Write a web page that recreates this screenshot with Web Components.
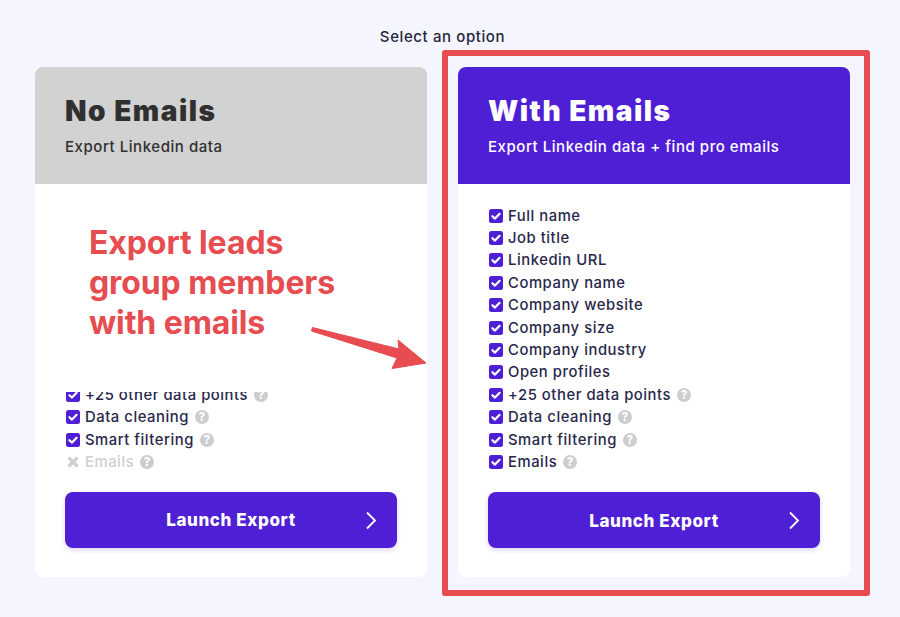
<!DOCTYPE html>
<html>
<head>
<meta charset="utf-8">
<title>Select an option</title>
<style>
  html, body { margin: 0; height: 100%; }
  body { background: #f5f5ff; font-family: "Inter", "Liberation Sans", sans-serif; overflow: hidden; }
</style>
</head>
<body>
<export-page>
  <option-card slot="cards" heading="No Emails" sub="Export Linkedin data" tone="muted">
    <red-note></red-note>
    <feature-list clip>
      <feature-row hint>+25 other data points</feature-row>
      <feature-row hint>Data cleaning</feature-row>
      <feature-row hint>Smart filtering</feature-row>
      <feature-row hint off>Emails</feature-row>
    </feature-list>
  </option-card>
  <option-card slot="cards" heading="With Emails" sub="Export Linkedin data + find pro emails" tone="brand">
    <feature-list>
      <feature-row>Full name</feature-row>
      <feature-row>Job title</feature-row>
      <feature-row>Linkedin URL</feature-row>
      <feature-row>Company name</feature-row>
      <feature-row>Company website</feature-row>
      <feature-row>Company size</feature-row>
      <feature-row>Company industry</feature-row>
      <feature-row>Open profiles</feature-row>
      <feature-row hint>+25 other data points</feature-row>
      <feature-row hint>Data cleaning</feature-row>
      <feature-row hint>Smart filtering</feature-row>
      <feature-row hint>Emails</feature-row>
    </feature-list>
  </option-card>
</export-page>

<script>
class ExportPage extends HTMLElement {
  constructor() {
    super();
    this.attachShadow({ mode: 'open' });
    this.shadowRoot.innerHTML = `
    <style>
      :host{ display:block; position:relative; width:900px; height:617px; box-sizing:border-box; padding-top:27px; }
      h1{
        margin:0 0 21px; padding-right:15px; text-align:center; font-size:15px; line-height:19px; font-weight:500;
        letter-spacing:.6px; color:#25253a;
      }
      .cards{ display:grid; grid-template-columns:392px 392px; column-gap:31px; padding-left:35px; }
      .frame{
        position:absolute; left:442px; top:50px; width:428px; height:546px; box-sizing:border-box;
        border:6px solid #e64c50; border-radius:3px; pointer-events:none;
      }
      svg{ position:absolute; left:0; top:0; pointer-events:none; }
    </style>
    <h1>Select an option</h1>
    <div class="cards"><slot name="cards"></slot></div>
    <div class="frame"></div>
    <svg width="900" height="617" viewBox="0 0 900 617">
      <path d="M312.5 327.5 L399 349 L398 340 L426 363 L392 368.5 L397 358 L311.5 331 Z" fill="#e64c50" stroke="#e64c50" stroke-width="1" stroke-linejoin="round"/>
    </svg>`;
  }
}

class OptionCard extends HTMLElement {
  constructor() {
    super();
    this.attachShadow({ mode: 'open' });
  }
  connectedCallback() {
    const brand = this.getAttribute('tone') === 'brand';
    this.shadowRoot.innerHTML = `
    <style>
      :host{ display:flex; flex-direction:column; height:510px; background:#fff; border-radius:8px; }
      header{
        height:117px; box-sizing:border-box; padding:27px 30px 0; border-radius:8px 8px 0 0;
        background:${brand ? '#4f1fd6' : '#d2d2d2'}; color:${brand ? '#fff' : '#303030'};
      }
      h2{ margin:0; font-size:28px; line-height:34px; font-weight:900; letter-spacing:1.5px; }
      p{ margin:10px 0 0; font-size:15px; line-height:18px; font-weight:500; letter-spacing:.55px; }
      main{ flex:1; display:flex; flex-direction:column; min-height:0; padding:0 30px; }
      launch-button{ margin-bottom:29px; }
    </style>
    <header><h2>${this.getAttribute('heading')}</h2><p>${this.getAttribute('sub')}</p></header>
    <main><slot></slot><launch-button>Launch Export</launch-button></main>`;
  }
}

class RedNote extends HTMLElement {
  constructor() {
    super();
    this.attachShadow({ mode: 'open' });
    this.shadowRoot.innerHTML = `
    <style>
      :host{ display:block; flex:none; height:207.5px; box-sizing:border-box; padding:39px 0 0 24px; color:#e64c50;
        font-size:32px; line-height:40px; font-weight:700; letter-spacing:-.1px; }
    </style>
    Export leads<br>group members<br>with emails`;
  }
}

class FeatureList extends HTMLElement {
  constructor() {
    super();
    this.attachShadow({ mode: 'open' });
    this.shadowRoot.innerHTML = `
    <style>
      :host{ display:flex; flex:none; flex-direction:column; justify-content:flex-end; height:81.7px; padding:0 0 18.8px 1px; overflow:hidden; }
      :host(:not([clip])){ height:auto; padding-top:20.5px; flex:1; justify-content:flex-start; }
      ::slotted(feature-row){ flex:none; }
    </style>
    <slot></slot>`;
  }
}

class FeatureRow extends HTMLElement {
  constructor() {
    super();
    this.attachShadow({ mode: 'open' });
  }
  connectedCallback() {
    const off = this.hasAttribute('off');
    const mark = off
      ? `<svg class="box" width="14" height="14" viewBox="0 0 14 14"><path d="M3.5 3.5 L10.5 10.5 M10.5 3.5 L3.5 10.5" stroke="#cfcfcf" stroke-width="3.2" stroke-linecap="round"/></svg>`
      : `<svg class="box" width="14" height="14" viewBox="0 0 14 14"><rect width="14" height="14" rx="2.5" fill="#4f1fd6"/><path d="M3.4 7.2 L6 9.6 L10.6 4.8" fill="none" stroke="#fff" stroke-width="2.2" stroke-linecap="round" stroke-linejoin="round"/></svg>`;
    const hint = this.hasAttribute('hint')
      ? `<span class="hint">?</span>`
      : '';
    this.shadowRoot.innerHTML = `
    <style>
      :host{ display:flex; align-items:center; height:22.4px; font-size:14.8px; font-weight:450;
        letter-spacing:.55px; color:${off ? '#cfcfcf' : '#27274a'}; white-space:nowrap; }
      .box{ flex:none; margin-right:5px; }
      .hint{
        flex:none; width:14px; height:14px; margin-left:6px; border-radius:50%;
        background:#cdcdcd; color:#fff; font-size:11.5px; line-height:14px; font-weight:800;
        letter-spacing:0; text-align:center;
      }
    </style>
    ${mark}<span><slot></slot></span>${hint}`;
  }
}

class LaunchButton extends HTMLElement {
  constructor() {
    super();
    this.attachShadow({ mode: 'open' });
    this.shadowRoot.innerHTML = `
    <style>
      :host{
        display:flex; align-items:center; justify-content:center; position:relative; height:56px; flex:none;
        box-sizing:border-box; padding-top:1px;
        background:#4f1fd6; color:#fff; border-radius:8px; box-shadow:0 2px 5px rgba(79,31,214,.2);
        font-size:17px; font-weight:800; letter-spacing:.6px;
      }
      svg{ position:absolute; right:20px; top:19px; }
    </style>
    <slot></slot>
    <svg width="12" height="19" viewBox="0 0 12 19"><path d="M2 1.5 L10 9.5 L2 17.5" fill="none" stroke="#fff" stroke-width="1.8"/></svg>`;
  }
}

customElements.define('export-page', ExportPage);
customElements.define('option-card', OptionCard);
customElements.define('red-note', RedNote);
customElements.define('feature-list', FeatureList);
customElements.define('feature-row', FeatureRow);
customElements.define('launch-button', LaunchButton);
</script>
</body>
</html>
